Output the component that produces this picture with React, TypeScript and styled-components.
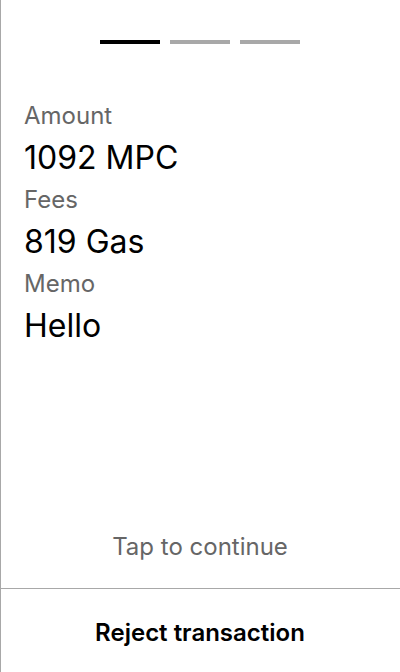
import React from "react";
import styled, { createGlobalStyle } from "styled-components";

const Global = createGlobalStyle`
  html, body { margin: 0; padding: 0; background: #fff; }
  body { font-family: Inter, "Noto Sans", sans-serif; }
  * { box-sizing: border-box; }
`;

const Screen = styled.div`
  width: 400px;
  height: 672px;
  display: flex;
  flex-direction: column;
  border-left: 1px solid #a8a8a8;
  background: #fff;
  font-family: Inter, "Noto Sans", sans-serif;
`;

const Progress = styled.div`
  display: flex;
  justify-content: center;
  gap: 10px;
  padding-top: 40px;
  margin-left: -1px;
`;

const Step = styled.div<{ $active?: boolean }>`
  width: 60px;
  height: 4px;
  background: ${(p) => (p.$active ? "#000" : "#a8a8a8")};
`;

const Details = styled.div`
  display: flex;
  flex-direction: column;
  padding: 56px 23px 0;
  flex: 1;
`;

const Field = styled.div`
  display: flex;
  flex-direction: column;
`;

const Label = styled.div`
  font-size: 24px;
  line-height: 32px;
  color: #666;
`;

const Value = styled.div`
  font-size: 32px;
  line-height: 52px;
  color: #000;
`;

const Hint = styled.div`
  text-align: center;
  font-size: 24px;
  line-height: 30px;
  color: #666;
  padding-bottom: 26px;
  margin-left: -1px;
`;

const Divider = styled.div`
  height: 1px;
  background: #a8a8a8;
`;

const RejectButton = styled.button`
  height: 83px;
  border: none;
  background: transparent;
  font-family: Inter, "Noto Sans", sans-serif;
  font-size: 24px;
  font-weight: 600;
  color: #000;
  padding: 4px 0 0;
  margin-left: -1px;
  cursor: pointer;
`;

const fields = [
  { label: "Amount", value: "1092 MPC" },
  { label: "Fees", value: "819 Gas" },
  { label: "Memo", value: "Hello" },
];

export default function App() {
  return (
    <>
      <Global />
      <Screen>
        <Progress>
          <Step $active />
          <Step />
          <Step />
        </Progress>
        <Details>
          {fields.map((f) => (
            <Field key={f.label}>
              <Label>{f.label}</Label>
              <Value>{f.value}</Value>
            </Field>
          ))}
        </Details>
        <Hint>Tap to continue</Hint>
        <Divider />
        <RejectButton>Reject transaction</RejectButton>
      </Screen>
    </>
  );
}
